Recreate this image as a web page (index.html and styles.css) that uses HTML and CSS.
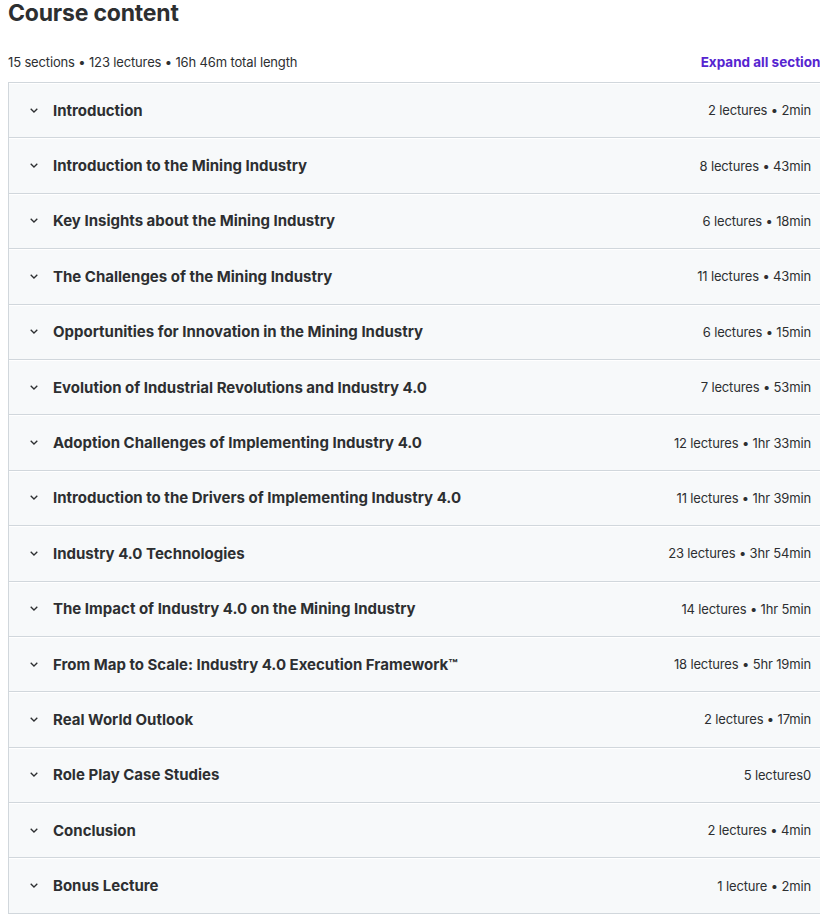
FILE: index.html
```html
<!DOCTYPE html>
<html lang="en">

<head>
    <meta charset="UTF-8">
    <meta name="viewport" content="width=device-width, initial-scale=1.0">
    <title>Course content</title>
    <link rel="stylesheet" href="styles.css">
</head>

<body>
    <div class="curriculum">
        <h2>Course content</h2>
        <div class="summary">
            <span>15 sections • 123 lectures • 16h 46m total length</span>
            <button class="expand">Expand all sections</button>
        </div>

        <div class="sections">
            <div class="section">
                <div class="title"><svg class="chev" viewBox="0 0 8 5"><path d="M0.7 0.7l3.3 3.3 3.3-3.3" /></svg>Introduction</div>
                <span class="meta">2 lectures • 2min</span>
            </div>
            <div class="section">
                <div class="title"><svg class="chev" viewBox="0 0 8 5"><path d="M0.7 0.7l3.3 3.3 3.3-3.3" /></svg>Introduction to the Mining Industry</div>
                <span class="meta">8 lectures • 43min</span>
            </div>
            <div class="section">
                <div class="title"><svg class="chev" viewBox="0 0 8 5"><path d="M0.7 0.7l3.3 3.3 3.3-3.3" /></svg>Key Insights about the Mining Industry</div>
                <span class="meta">6 lectures • 18min</span>
            </div>
            <div class="section">
                <div class="title"><svg class="chev" viewBox="0 0 8 5"><path d="M0.7 0.7l3.3 3.3 3.3-3.3" /></svg>The Challenges of the Mining Industry</div>
                <span class="meta">11 lectures • 43min</span>
            </div>
            <div class="section">
                <div class="title"><svg class="chev" viewBox="0 0 8 5"><path d="M0.7 0.7l3.3 3.3 3.3-3.3" /></svg>Opportunities for Innovation in the Mining Industry</div>
                <span class="meta">6 lectures • 15min</span>
            </div>
            <div class="section">
                <div class="title"><svg class="chev" viewBox="0 0 8 5"><path d="M0.7 0.7l3.3 3.3 3.3-3.3" /></svg>Evolution of Industrial Revolutions and Industry 4.0</div>
                <span class="meta">7 lectures • 53min</span>
            </div>
            <div class="section">
                <div class="title"><svg class="chev" viewBox="0 0 8 5"><path d="M0.7 0.7l3.3 3.3 3.3-3.3" /></svg>Adoption Challenges of Implementing Industry 4.0</div>
                <span class="meta">12 lectures • 1hr 33min</span>
            </div>
            <div class="section">
                <div class="title"><svg class="chev" viewBox="0 0 8 5"><path d="M0.7 0.7l3.3 3.3 3.3-3.3" /></svg>Introduction to the Drivers of Implementing Industry 4.0</div>
                <span class="meta">11 lectures • 1hr 39min</span>
            </div>
            <div class="section">
                <div class="title"><svg class="chev" viewBox="0 0 8 5"><path d="M0.7 0.7l3.3 3.3 3.3-3.3" /></svg>Industry 4.0 Technologies</div>
                <span class="meta">23 lectures • 3hr 54min</span>
            </div>
            <div class="section">
                <div class="title"><svg class="chev" viewBox="0 0 8 5"><path d="M0.7 0.7l3.3 3.3 3.3-3.3" /></svg>The Impact of Industry 4.0 on the Mining Industry</div>
                <span class="meta">14 lectures • 1hr 5min</span>
            </div>
            <div class="section">
                <div class="title"><svg class="chev" viewBox="0 0 8 5"><path d="M0.7 0.7l3.3 3.3 3.3-3.3" /></svg>From Map to Scale: Industry 4.0 Execution Framework™</div>
                <span class="meta">18 lectures • 5hr 19min</span>
            </div>
            <div class="section">
                <div class="title"><svg class="chev" viewBox="0 0 8 5"><path d="M0.7 0.7l3.3 3.3 3.3-3.3" /></svg>Real World Outlook</div>
                <span class="meta">2 lectures • 17min</span>
            </div>
            <div class="section">
                <div class="title"><svg class="chev" viewBox="0 0 8 5"><path d="M0.7 0.7l3.3 3.3 3.3-3.3" /></svg>Role Play Case Studies</div>
                <span class="meta">5 lectures0</span>
            </div>
            <div class="section">
                <div class="title"><svg class="chev" viewBox="0 0 8 5"><path d="M0.7 0.7l3.3 3.3 3.3-3.3" /></svg>Conclusion</div>
                <span class="meta">2 lectures • 4min</span>
            </div>
            <div class="section">
                <div class="title"><svg class="chev" viewBox="0 0 8 5"><path d="M0.7 0.7l3.3 3.3 3.3-3.3" /></svg>Bonus Lecture</div>
                <span class="meta">1 lecture • 2min</span>
            </div>
        </div>
    </div>
</body>

</html>
```

FILE: styles.css
```css
/* Basic Styles */
html {
    overflow: hidden;
}

body {
    font-family: Inter, "Noto Sans", sans-serif;
    color: #2d2f31;
    background-color: #fff;
    margin: 0;
    padding: 0 0 0 8px;
}

.curriculum {
    width: 820px;
}

h2 {
    margin: 0;
    font-size: 23px;
    line-height: 26px;
    font-weight: 700;
    letter-spacing: -0.2px;
}

/* summary row + expand link */
.summary {
    display: flex;
    justify-content: space-between;
    align-items: center;
    box-sizing: border-box;
    height: 56px;
    padding-top: 16px;
    font-size: 13px;
    letter-spacing: -0.15px;
}

.expand {
    background: none;
    border: none;
    padding: 0;
    font-family: inherit;
    font-size: 13.5px;
    font-weight: 700;
    color: #5624d0;
    cursor: pointer;
}

.sections {
    border-top: 1px solid #d1d7dc;
    border-left: 1px solid #d1d7dc;
}

.section {
    display: flex;
    justify-content: space-between;
    align-items: center;
    box-sizing: border-box;
    height: 55.4px;
    padding: 0 17px 0 20px;
    background-color: #f7f9fa;
    border-bottom: 1px solid #d1d7dc;
    box-shadow: inset 0 1px 0 #fff;
}

.title {
    display: flex;
    align-items: center;
    font-size: 15px;
    font-weight: 700;
}

.chev {
    width: 8px;
    height: 5px;
    margin: 0 15px 0 1px;
    fill: none;
    stroke: #2d2f31;
    stroke-width: 1.3;
}

.meta {
    font-size: 13px;
    letter-spacing: -0.15px;
}
```
